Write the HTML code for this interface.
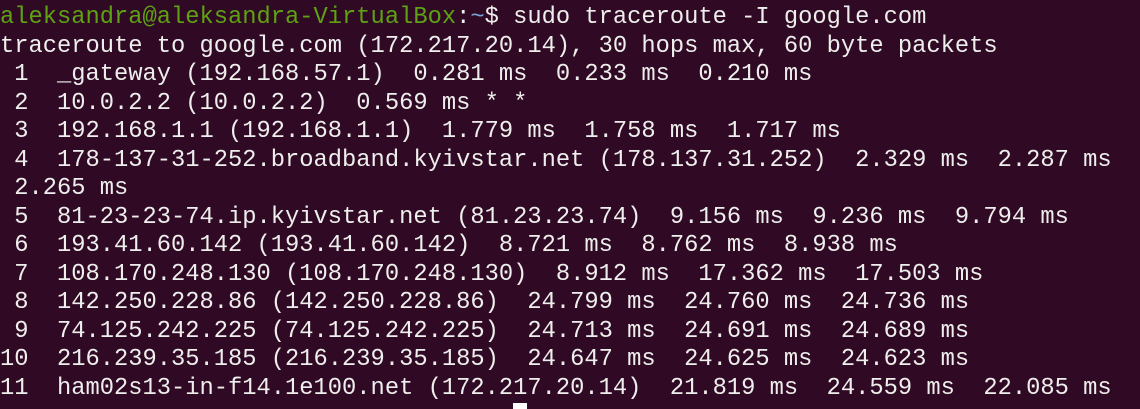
<!DOCTYPE html>
<html><head><meta charset="utf-8"><style>
html,body{margin:0;padding:0;width:1140px;height:408px;overflow:hidden;background:#300a24;}
pre{margin:0;position:absolute;left:0;top:4px;font-family:"Liberation Mono","DejaVu Sans Mono",monospace;font-size:23.75px;line-height:28.5px;color:#eeeeec;white-space:pre;}
.g{color:#5ea113;}.b{color:#7aa3d6;}
.cur{position:absolute;left:513px;top:403px;width:14px;height:6px;background:#fff;}
</style></head><body>
<pre><span class="g">aleksandra@aleksandra-VirtualBox</span>:<span class="b">~</span>$ sudo traceroute -I google.com
traceroute to google.com (172.217.20.14), 30 hops max, 60 byte packets
 1  _gateway (192.168.57.1)  0.281 ms  0.233 ms  0.210 ms
 2  10.0.2.2 (10.0.2.2)  0.569 ms * *
 3  192.168.1.1 (192.168.1.1)  1.779 ms  1.758 ms  1.717 ms
 4  178-137-31-252.broadband.kyivstar.net (178.137.31.252)  2.329 ms  2.287 ms
 2.265 ms
 5  81-23-23-74.ip.kyivstar.net (81.23.23.74)  9.156 ms  9.236 ms  9.794 ms
 6  193.41.60.142 (193.41.60.142)  8.721 ms  8.762 ms  8.938 ms
 7  108.170.248.130 (108.170.248.130)  8.912 ms  17.362 ms  17.503 ms
 8  142.250.228.86 (142.250.228.86)  24.799 ms  24.760 ms  24.736 ms
 9  74.125.242.225 (74.125.242.225)  24.713 ms  24.691 ms  24.689 ms
10  216.239.35.185 (216.239.35.185)  24.647 ms  24.625 ms  24.623 ms
11  ham02s13-in-f14.1e100.net (172.217.20.14)  21.819 ms  24.559 ms  22.085 ms</pre>
<div class="cur"></div>
</body></html>
